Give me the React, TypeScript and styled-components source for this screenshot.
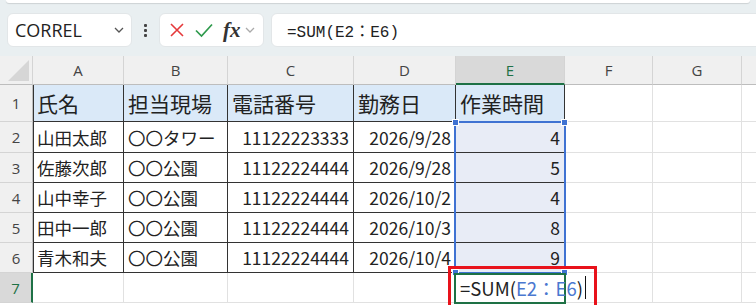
import React from 'react';
import styled, {createGlobalStyle} from 'styled-components';

const GlobalStyle = createGlobalStyle`
  body {
    margin: 0;
    background: #ffffff;
    font-family: 'Noto Sans', 'Noto Sans CJK JP', sans-serif;
  }
`;

const COLUMNS = ['A', 'B', 'C', 'D', 'E', 'F', 'G', ''];
const HEADERS = ['氏名', '担当現場', '電話番号', '勤務日', '作業時間'];
const ROWS = [
  ['山田太郎', '〇〇タワー', '11122223333', '2026/9/28', '4'],
  ['佐藤次郎', '〇〇公園', '11122224444', '2026/9/28', '5'],
  ['山中幸子', '〇〇公園', '11122224444', '2026/10/2', '4'],
  ['田中一郎', '〇〇公園', '11122224444', '2026/10/3', '8'],
  ['青木和夫', '〇〇公園', '11122224444', '2026/10/4', '9'],
];
const RIGHT_ALIGNED = [false, false, true, true, true];

const App: React.FC = () => {
  return (
    <Page>
      <GlobalStyle />
      <TopArea>
        <RibbonEdge />
        <FormulaBar>
          <NameBox>
            <NameText>CORREL</NameText>
            <Chevron size={12} color="#555" />
          </NameBox>
          <Kebab>
            <Dot />
            <Dot />
            <Dot />
          </Kebab>
          <FuncBox>
            <svg width="16" height="16" viewBox="0 0 16 16">
              <path d="M2 2 L14 14 M14 2 L2 14" stroke="#e5393b" strokeWidth="1.6" fill="none" />
            </svg>
            <svg width="20" height="16" viewBox="0 0 20 16">
              <path d="M2 8.5 L7.5 14 L18 2.5" stroke="#2e9a4c" strokeWidth="1.7" fill="none" />
            </svg>
            <FxLabel>
              <i>fx</i>
            </FxLabel>
            <Chevron size={12} color="#aaa" />
          </FuncBox>
          <FormulaInput>=SUM(E2：E6)</FormulaInput>
        </FormulaBar>
      </TopArea>

      <Sheet>
        <Corner>
          <svg width="33" height="29" viewBox="0 0 33 29">
            <path d="M8 25 L29 25 L29 4 Z" fill="#d6d6d6" />
          </svg>
        </Corner>
        {COLUMNS.map((c, i) => (
          <ColHeader key={i} $active={c === 'E'}>
            {c}
          </ColHeader>
        ))}

        {[0, 1, 2, 3, 4, 5, 6].map(r => {
          const rowNo = r + 1;
          const values = r === 0 ? HEADERS : r <= 5 ? ROWS[r - 1] : [];
          return (
            <React.Fragment key={r}>
              <RowHeader $active={rowNo === 7}>{rowNo}</RowHeader>
              {COLUMNS.map((_, ci) => {
                const inTable = r <= 5 && ci <= 4;
                const editing = rowNo === 7 && ci === 4;
                return (
                  <Cell
                    key={ci}
                    $table={inTable}
                    $first={ci === 0 && inTable}
                    $fill={r === 0 && ci <= 4 ? '#dae9f8' : r >= 1 && r <= 5 && ci === 4 ? '#e8ecf6' : undefined}
                    $right={r > 0 && r <= 5 && RIGHT_ALIGNED[ci]}
                    $big={r === 0}
                    $spill={editing}
                  >
                    {values[ci]}
                    {editing && (
                      <EditText>
                        =SUM(<RefText>E2：E6</RefText>)<Caret />
                      </EditText>
                    )}
                  </Cell>
                );
              })}
            </React.Fragment>
          );
        })}

        <RangeOutline>
          <Handle $top $left />
          <Handle $top />
          <Handle $left />
          <Handle />
        </RangeOutline>
        <ActiveCell />
        <Callout />
      </Sheet>
    </Page>
  );
};

export default App;

const Chevron: React.FC<{size: number; color: string}> = ({size, color}) => (
  <svg width={size} height={size} viewBox="0 0 12 12">
    <path d="M2 4 L6 8 L10 4" stroke={color} strokeWidth="1.3" fill="none" />
  </svg>
);

const Page = styled.div`
  width: 756px;
  height: 305px;
  overflow: hidden;
  background: #ffffff;
`;

const TopArea = styled.div`
  height: 56px;
  background: #e9eff1;
  display: flex;
  flex-direction: column;
`;

const RibbonEdge = styled.div`
  height: 3px;
  margin: 0 6px;
  background: #ffffff;
  border-radius: 0 0 6px 6px;
  box-shadow: 0 1px 1px rgba(0, 0, 0, 0.12);
`;

const FormulaBar = styled.div`
  display: flex;
  align-items: center;
  margin-top: 10px;
  height: 34px;
`;

const Box = styled.div`
  height: 34px;
  box-sizing: border-box;
  background: #ffffff;
  border: 1px solid #e2e6e8;
  border-radius: 6px;
  display: flex;
  align-items: center;
`;

const NameBox = styled(Box)`
  margin-left: 7px;
  width: 125px;
  padding: 0 6px 0 7px;
  justify-content: space-between;
`;

const NameText = styled.span`
  font-family: 'Open Sans', 'Noto Sans', sans-serif;
  font-size: 18px;
  color: #222;
`;

const Kebab = styled.div`
  width: 27px;
  display: flex;
  flex-direction: column;
  align-items: center;
  gap: 2px;
`;

const Dot = styled.span`
  width: 3px;
  height: 3px;
  background: #444;
  border-radius: 1px;
`;

const FuncBox = styled(Box)`
  width: 105px;
  padding: 0 4px 0 9px;
  gap: 9px;
`;

const FxLabel = styled.span`
  font-family: 'Liberation Serif', serif;
  font-size: 21px;
  font-weight: bold;
  color: #333;
  margin-right: -6px;
  line-height: 1;
`;

const FormulaInput = styled(Box)`
  flex: 1;
  margin-left: 7px;
  margin-right: -10px;
  padding-left: 15px;
  font-family: 'Liberation Mono', 'Noto Sans CJK JP', monospace;
  font-size: 16px;
  color: #222;
`;

const Sheet = styled.div`
  position: relative;
  display: grid;
  grid-template-columns: 33px 91px 104px 126px 102px 109px 88px 89px 40px;
  grid-template-rows: 29px 37px 31px 30px 30px 30px 30px 30px;
`;

const Corner = styled.div`
  background: #f0f0f0;
  border-bottom: 1px solid #bdbdbd;
  border-right: 1px solid #d4d4d4;
  box-sizing: border-box;
  overflow: hidden;
`;

const ColHeader = styled.div<{$active?: boolean}>`
  box-sizing: border-box;
  background: ${p => (p.$active ? '#d9d9d9' : '#f0f0f0')};
  border-right: 1px solid #d4d4d4;
  border-bottom: ${p => (p.$active ? '2px solid #1e7145' : '1px solid #bdbdbd')};
  color: ${p => (p.$active ? '#1e7145' : '#444')};
  font-family: 'Open Sans', 'Noto Sans', sans-serif;
  font-size: 15px;
  display: flex;
  align-items: center;
  justify-content: center;
`;

const RowHeader = styled.div<{$active?: boolean}>`
  box-sizing: border-box;
  background: ${p => (p.$active ? '#d9d9d9' : '#f0f0f0')};
  border-bottom: 1px solid #d4d4d4;
  border-right: ${p => (p.$active ? '2px solid #1e7145' : '1px solid #bdbdbd')};
  color: ${p => (p.$active ? '#1e7145' : '#444')};
  font-family: 'Open Sans', 'Noto Sans', sans-serif;
  font-size: 15px;
  display: flex;
  align-items: center;
  justify-content: center;
`;

const Cell = styled.div<{
  $table?: boolean;
  $first?: boolean;
  $fill?: string;
  $right?: boolean;
  $big?: boolean;
  $spill?: boolean;
}>`
  position: relative;
  box-sizing: border-box;
  background: ${p => p.$fill ?? '#ffffff'};
  border-right: 1px solid ${p => (p.$table ? '#333' : '#e1e1e1')};
  border-bottom: 1px solid ${p => (p.$table ? '#333' : '#e1e1e1')};
  box-shadow: ${p => (p.$first ? 'inset 1px 0 0 #333' : 'none')};
  display: flex;
  align-items: center;
  justify-content: ${p => (p.$right ? 'flex-end' : 'flex-start')};
  padding: 0 4px;
  font-family: 'Noto Sans CJK JP', sans-serif;
  font-size: ${p => (p.$big ? '21px' : '17.5px')};
  color: #222;
  white-space: nowrap;
  overflow: ${p => (p.$spill ? 'visible' : 'hidden')};
`;

const EditText = styled.span`
  position: relative;
  z-index: 4;
  font-family: 'Noto Sans CJK JP', sans-serif;
  font-size: 18.5px;
  color: #222;
  display: flex;
  align-items: center;
`;

const RefText = styled.span`
  color: #4a78d0;
`;

const Caret = styled.span`
  width: 1px;
  height: 23px;
  background: #111;
  margin-left: 2px;
`;

const RangeOutline = styled.div`
  position: absolute;
  grid-column: 6 / 7;
  grid-row: 3 / 8;
  inset: -1px -1px -1px -2px;
  border: 2px solid #3f72d2;
  pointer-events: none;
  z-index: 2;
`;

const Handle = styled.span<{$top?: boolean; $left?: boolean}>`
  position: absolute;
  width: 5px;
  height: 5px;
  background: #3f72d2;
  border: 1px solid #ffffff;
  ${p => (p.$top ? 'top: -4px;' : 'bottom: -4px;')}
  ${p => (p.$left ? 'left: -4px;' : 'right: -4px;')}
`;

const ActiveCell = styled.div`
  position: absolute;
  grid-column: 6 / 7;
  grid-row: 8 / 9;
  inset: 0 -1px -1px -2px;
  border: 2px solid #1e7145;
  pointer-events: none;
  z-index: 2;
`;

const Callout = styled.div`
  position: absolute;
  grid-column: 6 / 7;
  grid-row: 8 / 9;
  inset: -7px -32px -12px -8px;
  border: 3px solid #e8121b;
  pointer-events: none;
  z-index: 3;
`;
